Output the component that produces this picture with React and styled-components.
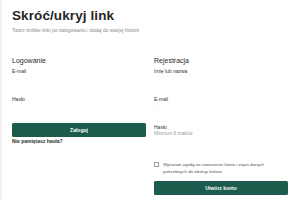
import styled, { createGlobalStyle } from 'styled-components';

const GlobalStyle = createGlobalStyle`
  html, body {
    margin: 0;
    padding: 0;
    background: #ffffff;
    font-family: "Liberation Sans", Arial, sans-serif;
    color: #1f1f1f;
  }
  * { box-sizing: border-box; }
`;

const Page = styled.div`
  width: 300px;
  height: 200px;
  overflow: hidden;
  border-left: 2px solid #f2f2f2;
  padding: 8px 12px 0 10px;
  background: #fff;
`;

const Title = styled.h1`
  margin: 0;
  font-size: 13.5px;
  line-height: 16px;
  font-weight: 700;
  color: #262626;
  letter-spacing: 0.1px;
`;

const Subtitle = styled.p`
  margin: 4px 0 0;
  font-size: 4.9px;
  line-height: 6px;
  color: #8a8a8a;
`;

const Columns = styled.div`
  display: grid;
  grid-template-columns: 134px 134px;
  column-gap: 8px;
  margin-top: 22px;
`;

const Column = styled.section`
  display: flex;
  flex-direction: column;
`;

const Heading = styled.h2`
  margin: 0 0 3px;
  font-size: 7px;
  line-height: 9px;
  font-weight: 400;
  color: #2a2a2a;
`;

const Label = styled.label`
  display: block;
  font-size: 5px;
  line-height: 6px;
  color: #333;
`;

const Hint = styled.span`
  display: block;
  font-size: 4.5px;
  line-height: 5px;
  margin-top: 1px;
  color: #9a9a9a;
`;

const Input = styled.input`
  display: block;
  width: 100%;
  height: ${(p) => p.$h || 16}px;
  margin: 3px 0 ${(p) => (p.$last ? 2 : 3)}px;
  border: none;
  background: #fff;
  box-shadow: 0 0 3px rgba(0, 0, 0, 0.035);
  border-radius: 2px;
  outline: none;
`;

const Button = styled.button`
  display: block;
  width: 100%;
  height: 14px;
  border: none;
  border-radius: 1.5px;
  background: #1c5c4c;
  color: #fff;
  font-family: inherit;
  font-size: 5px;
  font-weight: 700;
  padding: 0;
  cursor: pointer;
`;

const Forgot = styled.a`
  display: block;
  margin-top: 1px;
  font-size: 5px;
  line-height: 6px;
  font-weight: 600;
  color: #1f2f2a;
  text-decoration: none;
`;

const Consent = styled.label`
  display: flex;
  align-items: flex-start;
  gap: 4px;
  margin: 3px 0 6px;
  font-size: 4.4px;
  line-height: 7px;
  color: #555;
`;

const Box = styled.span`
  flex: none;
  width: 5px;
  height: 5px;
  margin-top: 1px;
  border: 0.6px solid #9a9a9a;
  border-radius: 0.8px;
  background: #fff;
`;

export default function App() {
  return (
    <>
      <GlobalStyle />
      <Page>
        <Title>Skróć/ukryj link</Title>
        <Subtitle>Twórz krótkie linki po zalogowaniu i dodaj do swojej historii</Subtitle>
        <Columns>
          <Column>
            <Heading>Logowanie</Heading>
            <Label>E-mail</Label>
            <Input type="email" />
            <Label>Hasło</Label>
            <Input type="password" $last />
            <Button>Zaloguj</Button>
            <Forgot href="#">Nie pamiętasz hasła?</Forgot>
          </Column>
          <Column>
            <Heading>Rejestracja</Heading>
            <Label>Imię lub nazwa</Label>
            <Input type="text" />
            <Label>E-mail</Label>
            <Input type="email" />
            <Label>Hasło</Label>
            <Hint>Minimum 8 znaków</Hint>
            <Input type="password" />
            <Consent>
              <Box />
              <span>Wyrażam zgodę na utworzenie konta i zapis danych potrzebnych do obsługi linków</span>
            </Consent>
            <Button>Utwórz konto</Button>
          </Column>
        </Columns>
      </Page>
    </>
  );
}
